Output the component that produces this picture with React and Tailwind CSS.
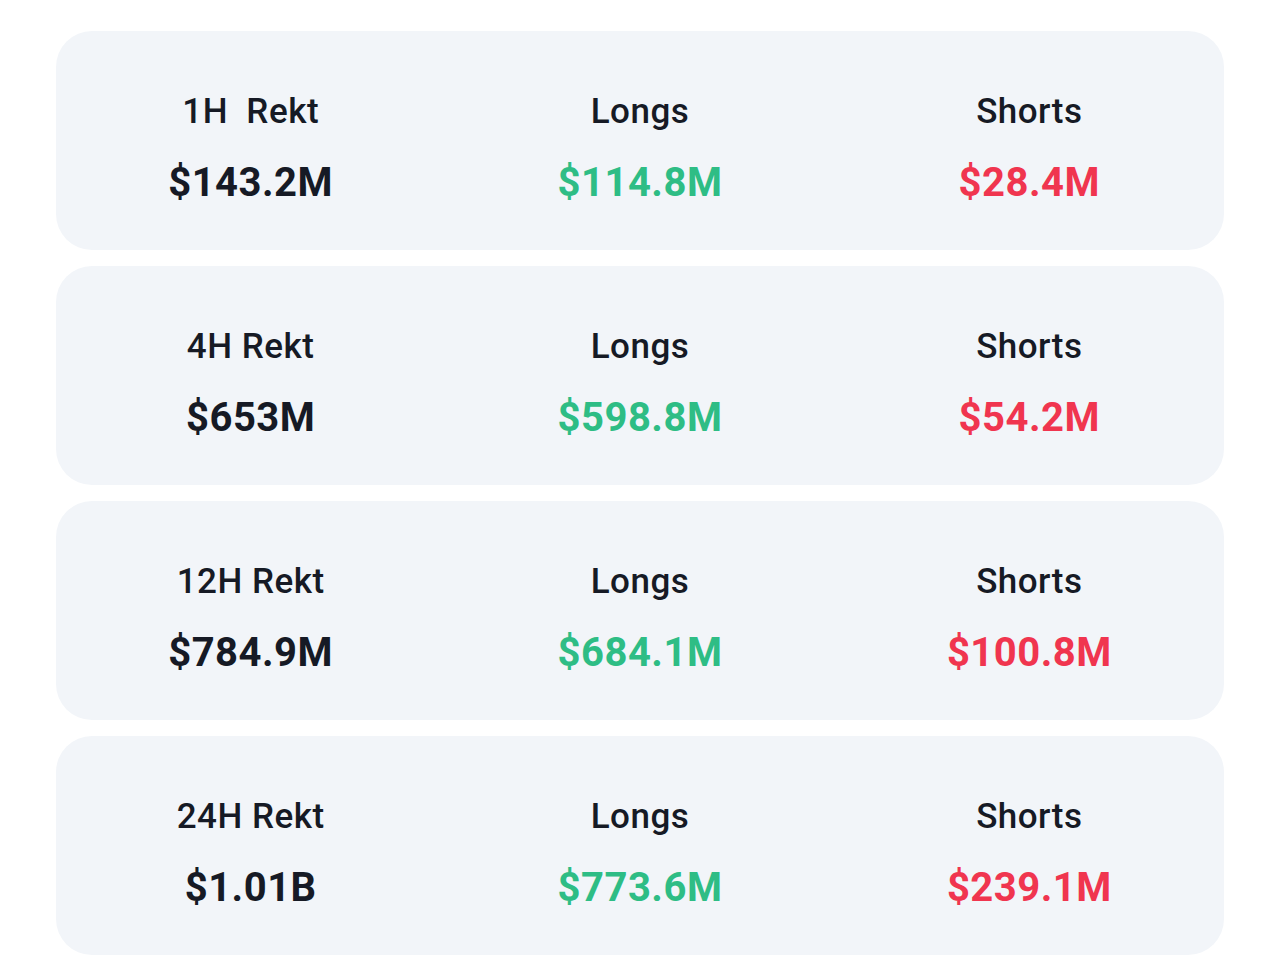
export default function App() {
  const rows = [
    { label: "1H  Rekt", total: "$143.2M", longs: "$114.8M", shorts: "$28.4M" },
    { label: "4H Rekt", total: "$653M", longs: "$598.8M", shorts: "$54.2M" },
    { label: "12H Rekt", total: "$784.9M", longs: "$684.1M", shorts: "$100.8M" },
    { label: "24H Rekt", total: "$1.01B", longs: "$773.6M", shorts: "$239.1M" },
  ];
  const font = { fontFamily: "Roboto, 'Noto Sans', sans-serif" };
  return (
    <div className="min-h-[969px] bg-white pt-[31px] px-[56px] flex flex-col gap-[16px]" style={font}>
      {rows.map((r, i) => (
        <div key={i} className="h-[219px] rounded-[36px] bg-[#f2f5f9] grid grid-cols-3">
          {[
            [r.label, r.total, "text-[#161a25]"],
            ["Longs", r.longs, "text-[#2ebd85]"],
            ["Shorts", r.shorts, "text-[#f0354f]"],
          ].map(([l, v, c], j) => (
            <div key={j} className="flex flex-col items-center pt-[61px] gap-[27px]">
              <div className="text-[35px] leading-[40px] font-medium text-[#161a25] whitespace-pre tracking-[0.5px]">{l}</div>
              <div className={`text-[40px] leading-[48px] font-bold tracking-[0.5px] ${c}`}>{v}</div>
            </div>
          ))}
        </div>
      ))}
    </div>
  );
}
